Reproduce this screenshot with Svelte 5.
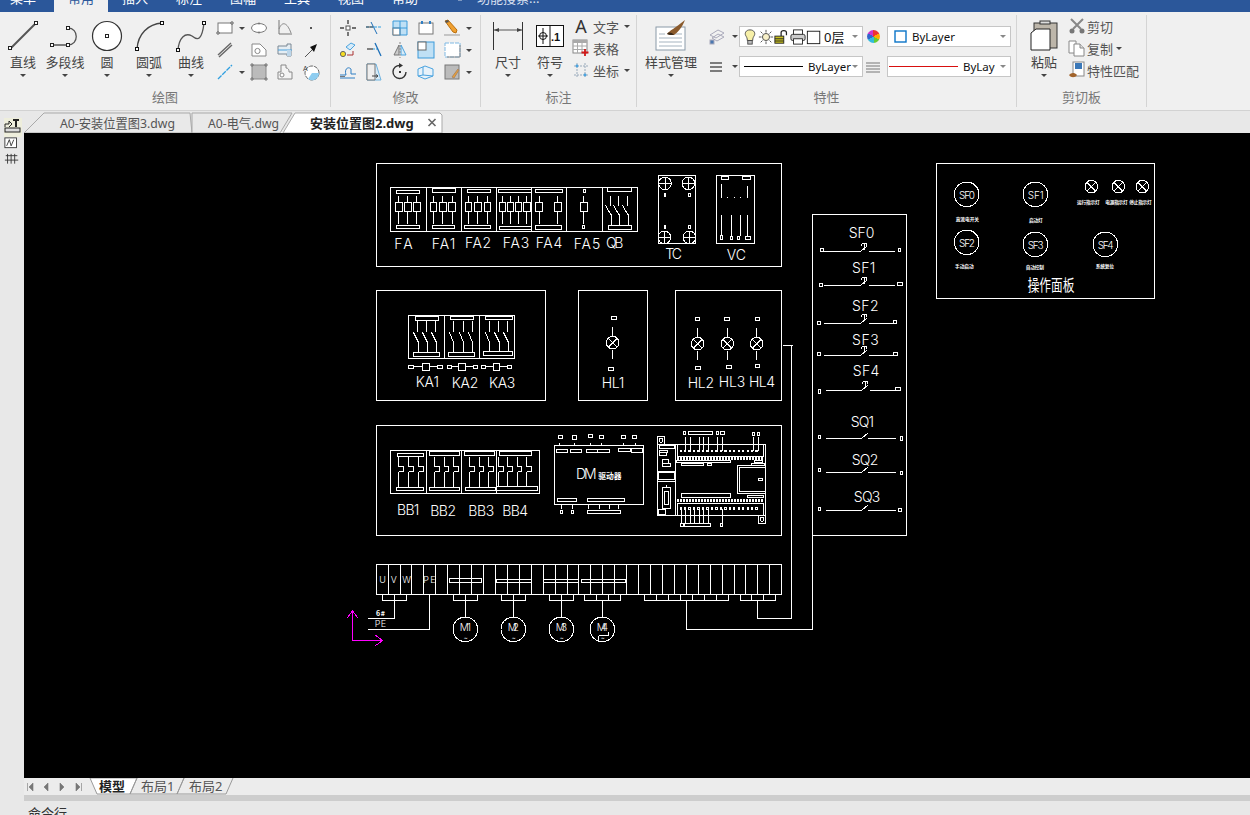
<script>
  const snap = (v) => Math.round(v - 0.5) + 0.5;
  let d = '';
  const circles = [];
  const labels = [];

  // coordinates are read off 3x crops: origin (ox,oy), values in crop pixels
  function crop(ox, oy) {
    const X = (v) => snap(ox + v / 3);
    const Y = (v) => snap(oy + v / 3);
    return {
      r(x1, y1, x2, y2) {
        d += `M${X(x1)} ${Y(y1)}H${X(x2)}V${Y(y2)}H${X(x1)}Z`;
      },
      l(x1, y1, x2, y2) {
        d += `M${X(x1)} ${Y(y1)}L${X(x2)} ${Y(y2)}`;
      },
      c(x, y, r, cross) {
        circles.push({ x: ox + x / 3, y: oy + y / 3, r: r / 3, cross });
      },
      t(text, x1, x2, base, size = 14, cls = 'cad') {
        labels.push({ text, x: ox + x1 / 3, y: oy + base / 3, w: (x2 - x1) / 3, size, cls });
      }
    };
  }

  // upper cabinet
  const a = crop(370, 155);
  a.r(19, 25, 1235, 333);
  a.r(61, 97, 803, 229);
  [170, 275, 380, 485, 590, 698].forEach((x) => a.l(x, 97, x, 229));
  const breakers = [
    { top: [79, 105, 149, 115], bot: [79, 211, 149, 221], poles: [86, 113, 140] },
    { top: [186, 100, 257, 113], bot: [186, 211, 254, 221], poles: [190, 218, 246] },
    { top: [291, 103, 362, 113], bot: [283, 211, 362, 221], poles: [295, 323, 352] },
    { top: [384, 102, 485, 112], bot: [387, 213, 485, 224], poles: [397, 421, 445, 470] },
    { top: [497, 103, 578, 113], bot: [497, 211, 575, 224], poles: [507, 563] },
    { top: [640, 103, 646, 113], bot: [637, 211, 643, 221], poles: [641] }
  ];
  breakers.forEach((b) => {
    a.r(...b.top);
    a.r(...b.bot);
    b.poles.forEach((x) => {
      a.l(x, 120, x, 142);
      a.r(x - 10, 142, x + 10, 170);
      a.l(x, 170, x, 205);
    });
  });
  a.r(712, 98, 785, 110);
  a.r(716, 211, 785, 224);
  [720, 745, 772].forEach((x) => {
    a.l(x, 120, x, 150);
    a.l(x - 15, 152, x + 3, 182);
    a.l(x + 3, 176, x + 3, 208);
  });
  a.r(865, 61, 977, 266);
  [[885, 85], [955, 85], [883, 247], [958, 247]].forEach(([x, y]) => a.c(x, y, 19, 'plus'));
  [[885, 120], [958, 120], [885, 215], [958, 215]].forEach(([x, y]) => a.r(x - 2, y - 5, x + 2, y + 5));
  a.r(1039, 61, 1154, 266);
  a.r(1055, 65, 1075, 73);
  a.r(1118, 65, 1141, 73);
  a.l(1054, 85, 1054, 128);
  a.l(1133, 90, 1133, 128);
  [1072, 1092, 1112].forEach((x) => a.l(x, 125, x, 128));
  [1054, 1085, 1110, 1133].forEach((x) => a.l(x, 178, x, 240));
  a.r(1051, 240, 1056, 252);
  a.r(1081, 244, 1088, 254);
  a.r(1102, 244, 1109, 254);
  a.r(1126, 244, 1142, 254);
  [
    ['FA', 73, 128, 282], ['FA1', 185, 256, 282], ['FA2', 285, 363, 278], ['FA3', 398, 478, 278],
    ['FA4', 497, 577, 278], ['FA5', 611, 691, 281], ['QB', 708, 760, 278], ['TC', 886, 936, 311], ['VC', 1070, 1128, 314]
  ].forEach(([t, x1, x2, y]) => a.t(t, x1, x2, y));

  // relays
  a.r(19, 406, 527, 737);
  a.r(115, 481, 434, 610);
  a.l(223, 481, 223, 610);
  a.l(328, 481, 328, 610);
  [[136, 484, 206, 496], [241, 484, 311, 494], [346, 484, 426, 494], [130, 591, 209, 603], [235, 592, 314, 605], [340, 588, 428, 600]]
    .forEach((b) => a.r(...b));
  [[142, 169, 196], [249, 279, 306], [357, 385, 413]].forEach((set) =>
    set.forEach((x) => {
      a.l(x, 497, x, 530);
      a.l(x - 12, 532, x + 2, 562);
      a.l(x + 2, 558, x + 2, 588);
    })
  );
  [[116, 130, 157, 177, 202, 218], [232, 245, 265, 287, 310, 322], [334, 347, 370, 389, 412, 425]].forEach(([p, q, s, t, u, v]) => {
    a.r(p, 631, q, 640);
    a.l(q, 635, s, 635);
    a.r(s, 625, t, 647);
    a.l(t, 635, u, 635);
    a.r(u, 631, v, 640);
  });
  a.t('KA1', 137, 207, 695);
  a.t('KA2', 245, 325, 700);
  a.t('KA3', 357, 436, 700);

  // lamps
  a.r(625, 406, 833, 737);
  a.r(916, 406, 1235, 737);
  [[728, 563, 724, 484, 740, 494, 715, 637, 731, 647], [983, 566, 976, 487, 989, 497, 977, 633, 992, 643], [1072, 566, 1063, 487, 1079, 497, 1069, 631, 1085, 640], [1160, 566, 1156, 487, 1169, 497, 1156, 628, 1169, 637]]
    .forEach(([x, y, p, q, r, s, t, u, v, w]) => {
      a.r(p, q, r, s);
      a.l(x, y - 48, x, y - 19);
      a.c(x, y, 19, 'x');
      a.l(x, y + 19, x, y + 47);
      a.r(t, u, v, w);
    });
  a.t('HL1', 695, 763, 700);
  a.t('HL2', 953, 1032, 700);
  a.t('HL3', 1046, 1126, 697);
  a.t('HL4', 1137, 1215, 695);

  // lower cabinet
  const b = crop(370, 420);
  b.r(19, 15, 1235, 347);
  b.r(61, 91, 509, 220);
  [170, 275, 380].forEach((x) => b.l(x, 91, x, 220));
  [[81, 100, 161, 110], [177, 95, 267, 105], [282, 95, 372, 105], [387, 95, 485, 105], [79, 202, 159, 212], [177, 202, 267, 212], [285, 202, 375, 212], [380, 198, 503, 212]]
    .forEach((r) => b.r(...r));
  [85, 115, 145, 193, 222, 250, 298, 327, 356, 385, 412, 441, 470].forEach((x) => {
    b.l(x, 108, x, 138);
    b.l(x, 138, x + 14, 138);
    b.l(x + 14, 138, x + 14, 155);
    b.l(x + 14, 155, x, 155);
    b.l(x, 155, x, 198);
  });
  b.t('BB1', 81, 148, 285);
  b.t('BB2', 181, 258, 288);
  b.t('BB3', 295, 373, 288);
  b.t('BB4', 397, 474, 288);

  // driver
  b.r(553, 76, 821, 254);
  [[565, 46, 577, 56, 568], [607, 46, 619, 58, 612], [655, 43, 668, 53, 661], [688, 46, 700, 56, 694], [754, 46, 767, 56, 760], [787, 46, 800, 56, 795]]
    .forEach(([x1, y1, x2, y2, x]) => {
      b.r(x1, y1, x2, y2);
      b.l(x, 66, x, 76);
    });
  [[559, 88, 593, 97], [601, 88, 635, 97], [649, 88, 682, 97], [682, 88, 717, 97], [745, 84, 782, 94], [783, 86, 818, 97], [562, 235, 620, 245], [652, 235, 764, 245], [571, 270, 578, 281], [604, 270, 611, 281], [652, 270, 752, 280]]
    .forEach((r) => b.r(...r));
  [574, 607, 655, 688, 717, 745].forEach((x) => b.l(x, 254, x, 266));
  b.t('DM', 618, 680, 178);
  b.t('驱动器', 685, 755, 177, 7.8, 'heavy');

  // PLC
  const p = crop(650, 428);
  p.r(22, 48, 347, 263);
  p.r(22, 25, 44, 48);
  p.c(33, 37, 6);
  p.r(325, 263, 347, 285);
  p.c(336, 274, 6);
  p.l(76, 48, 76, 263);
  [[28, 52, 72, 60], [28, 66, 52, 74], [28, 74, 50, 82], [36, 94, 54, 106], [38, 106, 62, 116], [26, 134, 72, 155], [25, 245, 45, 258], [82, 48, 340, 85], [82, 225, 340, 262], [262, 111, 345, 197], [268, 117, 345, 191], [324, 150, 338, 158], [99, 10, 107, 20], [114, 10, 186, 20], [198, 10, 206, 20], [210, 10, 224, 20], [306, 13, 314, 23], [321, 13, 329, 23], [91, 285, 99, 296], [102, 285, 182, 296], [210, 285, 218, 296], [78, 98, 240, 104], [93, 105, 160, 113], [172, 105, 185, 113], [93, 196, 240, 208], [305, 106, 342, 111], [312, 96, 338, 104], [292, 201, 340, 209]]
    .forEach((r) => p.r(...r));
  p.l(22, 130, 76, 130);
  p.l(22, 160, 76, 160);
  p.r(38, 178, 62, 240);
  p.l(50, 170, 50, 178);
  p.r(44, 190, 56, 228);
  [107, 122, 148, 161, 175, 203, 217, 310, 325].forEach((x) => p.l(x, 25, x, 68));
  [94, 107, 121, 134, 148, 161, 175, 216].forEach((x) => p.l(x, 241, x, 285));
  for (let x = 92; x < 332; x += 13.4) {
    p.r(x - 2, 66, x + 2, 70);
    p.r(x - 2, 239, x + 2, 243);
  }
  for (let x = 82; x < 340; x += 9) {
    p.r(x, 88, x + 4, 94);
    p.r(x, 215, x + 4, 221);
  }

  // terminal strip and motors
  const c = crop(340, 555);
  c.r(109, 28, 1325, 118);
  [146, 182, 215, 251, 287, 323, 359, 395, 431, 467, 503, 539, 575, 611, 647, 683, 716, 752, 788, 824, 860, 896, 932, 968, 1004, 1040, 1076, 1112, 1148, 1184, 1217, 1253, 1289]
    .forEach((x) => c.l(x, 28, x, 118));
  c.r(328, 70, 425, 83);
  c.r(468, 73, 574, 82);
  c.r(611, 73, 716, 82);
  c.r(724, 73, 857, 82);
  [[127, 200, [163]], [340, 413, [376]], [484, 557, [520]], [628, 701, [664]], [733, 842, [769, 806]], [913, 1166, [949, 985, 1021, 1058, 1094, 1130]], [1201, 1307, [1234, 1271]]]
    .forEach(([x1, x2, divs]) => {
      c.r(x1, 119, x2, 137);
      divs.forEach((x) => c.l(x, 119, x, 137));
    });
  c.l(163, 137, 163, 190);
  c.l(163, 190, 81, 190);
  c.l(269, 118, 269, 223);
  c.l(269, 223, 81, 223);
  [[376, 'M1'], [520, 'M2'], [664, 'M3'], [787, 'M4']].forEach(([x, t]) => {
    c.l(x, 137, x, 187);
    c.c(x, 223, 37);
    c.t(t, x - 17, x + 17, 229, 10);
    c.t('~', x - 5, x + 6, 254, 6);
  });
  c.l(775, 240, 775, 258);
  c.l(775, 240, 805, 240);
  c.l(805, 240, 805, 228);
  c.t('U', 118, 135, 85, 9);
  c.t('V', 152, 172, 85, 9);
  c.t('W', 187, 210, 85, 9);
  c.t('PE', 250, 287, 85, 9);
  c.t('6#', 108, 135, 182, 7, 'heavy');
  c.t('PE', 104, 138, 215, 9);
  c.l(1355, -630, 1355, 190);
  c.l(1355, 190, 1252, 190);
  c.l(1252, 190, 1252, 137);
  c.l(1418, -70, 1418, 223);
  c.l(1418, 223, 1040, 223);
  c.l(1040, 223, 1040, 137);
  a.l(1237, 572, 1266, 572);

  // switches column
  const e = crop(805, 155);
  e.r(22, 178, 305, 1141);
  [
    ['SF0', 131, 208, 250, 290, [46, 281, 54, 290], 55, 165, 190, 268, [279, 280, 285, 290], true],
    ['SF1', 141, 211, 354, 392, [43, 385, 51, 394], 55, 165, 190, 268, [277, 382, 293, 392], true],
    ['SF2', 141, 221, 468, 505, [37, 499, 45, 509], 55, 165, 190, 265, [265, 496, 275, 505], true],
    ['SF3', 141, 221, 570, 601, [37, 591, 45, 601], 55, 165, 190, 265, [265, 592, 278, 601], true],
    ['SF4', 143, 223, 663, 706, [40, 703, 47, 715], 60, 168, 193, 272, [272, 697, 285, 706], true],
    ['SQ1', 137, 207, 817, 850, [40, 841, 47, 851], 60, 168, 187, 272, [286, 845, 293, 856], false],
    ['SQ2', 140, 220, 930, 952, [40, 940, 47, 950], 60, 168, 187, 272, [286, 949, 293, 959], false],
    ['SQ3', 146, 226, 1042, 1066, [40, 1056, 47, 1066], 60, 168, 187, 272, [280, 1060, 290, 1070], false]
  ].forEach(([t, x1, x2, base, y, left, l1, l2, r1, r2, right, push]) => {
    e.t(t, x1, x2, base);
    e.r(...left);
    e.r(...right);
    e.l(l1, y, l2, y);
    e.l(r1, y, r2, y);
    e.l(l2, y, l2 + 22, y - 18);
    if (push) {
      e.l(l2 + 12, y - 8, l2 + 12, y - 26);
      e.l(l2 + 5, y - 26, l2 + 20, y - 26);
      e.l(l2 + 5, y - 26, l2 + 5, y - 20);
      e.l(l2 + 20, y - 26, l2 + 20, y - 20);
    }
  });

  // operator panel
  e.r(394, 25, 1049, 430);
  [['SF0', 485, 118], ['SF1', 691, 118], ['SF2', 485, 262], ['SF3', 691, 268], ['SF4', 901, 268]].forEach(([t, x, y]) => {
    e.c(x, y, 37);
    e.t(t, x - 23, x + 25, y + 13, 10);
  });
  [859, 940, 1012].forEach((x) => e.c(x, 95, 19, 'x'));
  [
    ['直流电开关', 452, 522, 198], ['启动灯', 672, 713, 201], ['运行指示灯', 816, 884, 146], ['电源指示灯', 901, 968, 146], ['停止指示灯', 973, 1040, 146],
    ['手动启动', 450, 506, 339], ['自动控制', 662, 717, 341], ['系统复位', 872, 927, 339]
  ].forEach(([t, x1, x2, y]) => e.t(t, x1, x2, y, 4.7, 'heavy'));
  e.t('操作面板', 668, 808, 407, 16, 'cjk');

  const shapes = d;

  const I = {
    line: '<path d="M4 28 28 4" stroke="#555" stroke-width="2"/><rect x="1.5" y="26.5" width="3" height="3" fill="#fff" stroke="#222"/><rect x="27.5" y="1.5" width="3" height="3" fill="#fff" stroke="#222"/>',
    pline: '<path d="M3 25H19M19 8C30 8 30 25 19 25" stroke="#555" stroke-width="1.3" fill="none"/><rect x="1.5" y="23.5" width="3" height="3" fill="#fff" stroke="#222"/><rect x="17.5" y="23.5" width="3" height="3" fill="#fff" stroke="#222"/><rect x="17.5" y="6.5" width="3" height="3" fill="#fff" stroke="#222"/>',
    circle: '<circle cx="16" cy="16" r="14.5" fill="#fff" stroke="#333" stroke-width="1.2"/><rect x="14.5" y="14.5" width="3" height="3" fill="#fff" stroke="#222"/>',
    arc: '<path d="M4 29C5 14 15 4 29 3" stroke="#444" stroke-width="1.4" fill="none"/><rect x="2.5" y="27.5" width="3" height="3" fill="#fff" stroke="#111"/><rect x="27.5" y="1.5" width="3" height="3" fill="#fff" stroke="#111"/>',
    spline: '<path d="M3 30C4 18 10 12 17 16C23 21 27 20 29 3" stroke="#555" stroke-width="1.3" fill="none"/><rect x="1.5" y="28.5" width="3" height="3" fill="#fff" stroke="#111"/><rect x="27.5" y="1.5" width="3" height="3" fill="#fff" stroke="#111"/>',
    dim: '<g transform="translate(0 2)"><path d="M1.5 0V28M30.5 0V28" stroke="#333" stroke-width="1"/><path d="M2 8H30" stroke="#555"/><path d="M2 8 7 6V10ZM30 8 25 6V10Z" fill="#444"/></g>',
    sym: '<g transform="translate(2 5)"><rect x=".5" y=".5" width="27" height="21" fill="#fff" stroke="#111"/><path d="M14 .5V21.5M7 3V19M2 11H12" stroke="#111"/><circle cx="7" cy="11" r="3.5" fill="none" stroke="#111"/><text x="15" y="16" font-family="Liberation Sans" font-weight="700" font-size="11" fill="#111">.1</text></g>',
    style: '<rect x="1" y="7" width="29" height="23" fill="#fff" stroke="#8a9aa8"/><path d="M4 14H10M4 18H27M4 22H27M4 26H27M14 14H27" stroke="#a5b3bf"/><path d="M12 14C14 11 20 8 30 0C27 8 22 13 19 15C16 15 14 15 12 14Z" fill="#8a5a2c"/><path d="M12 14C14 12 16 12 19 15C16 15 14 15 12 14Z" fill="#3a2a1a"/>',
    paste: '<rect x="6" y="3" width="23" height="25" fill="#bdb6aa" stroke="#333"/><rect x="12" y="1" width="10" height="3" fill="#ddd" stroke="#333"/><path d="M3 13 8 9H22V30H3Z" fill="#fff" stroke="#222"/>',
    rect: '<rect x="2" y="4" width="14" height="10" fill="#fff" stroke="#777"/><circle cx="2" cy="14" r="1.2" fill="#fff" stroke="#555"/><circle cx="16" cy="4" r="1.2" fill="#fff" stroke="#555"/>',
    ellipse: '<ellipse cx="9" cy="9" rx="7.5" ry="4.5" fill="#fff" stroke="#777"/><circle cx="9" cy="4.5" r="1" fill="#777"/><circle cx="9" cy="13.5" r="1" fill="#777"/>',
    graph: '<path d="M3 1V15H16" stroke="#777" fill="none"/><path d="M3 10C6 2 11 3 15 14" stroke="#888" fill="none"/>',
    dot: '<rect x="8" y="8" width="2" height="2" fill="#555"/>',
    mline: '<path d="M2 14 15 2M3 16 16 4" stroke="#666" stroke-width="1.4"/>',
    boundary: '<path d="M2 3H10L16 9V15H2Z" fill="#fff" stroke="#888"/><circle cx="7.5" cy="10" r="2.6" fill="#fff" stroke="#888"/>',
    block: '<path d="M2 5H11V3H15V15H11V13H2Z" fill="#e5edf3" stroke="#7a8894"/><path d="M2 9H16" stroke="#4aa3df"/><rect x="11" y="9" width="4" height="6" fill="#bcd6ea"/>',
    pointer: '<path d="M3 16 11 8" stroke="#555"/><path d="M15 3 8 6 12 11Z" fill="#111"/>',
    xline: '<path d="M2 16 16 2" stroke="#2f9fe0" stroke-width="1.3" stroke-dasharray="5 1"/>',
    hatch: '<rect x="2" y="2" width="14" height="14" fill="#bbb" stroke="#888"/><path d="M0 2H4M2 0V4M14 16H18M16 14V18M0 16H4M2 14V18M14 2H18M16 0V4" stroke="#777"/>',
    gear: '<path d="M5 2H10V5C13 5 13 8 13 9H16V16H2V9H5Z" fill="#f4f4f4" stroke="#888"/><circle cx="6" cy="12" r="2" fill="#fff" stroke="#888"/>',
    area: '<circle cx="10" cy="10" r="7" fill="#fff" stroke="#666" stroke-dasharray="4 1"/><path d="M10 10H17A7 7 0 0 1 6 16Z" fill="#8fcdf0"/><text x="1" y="8" font-family="Liberation Sans" font-size="7" fill="#444">A</text>',
    move: '<rect x="7" y="7" width="4" height="4" fill="#fff" stroke="#555"/><path d="M9 1V5M9 13V17M1 9H5M13 9H17" stroke="#444" stroke-width="1.4"/>',
    trim: '<path d="M1 8H17" stroke="#2f9fe0" stroke-dasharray="3 1"/><path d="M6 3 12 15" stroke="#1d6fb8"/><path d="M1 8H8" stroke="#444"/>',
    array: '<path d="M2 2H16V16H2Z" fill="#bfe0f5" stroke="#3a9ad9"/><rect x="2" y="9" width="7" height="7" fill="#fff" stroke="#777"/><path d="M9 2V16M2 9H16" stroke="#3a9ad9"/>',
    stretch: '<rect x="2" y="4" width="14" height="11" fill="#fff" stroke="#777"/><path d="M5 2V5M13 2V5" stroke="#2f7fc4" stroke-width="2"/>',
    erase: '<path d="M1 16H17" stroke="#999"/><path d="M2 2 5 1 14 11 13 14 10 13Z" fill="#f0a030" stroke="#b97010"/><path d="M2 2 5 1 6 3 3 4Z" fill="#555"/>',
    copy2: '<circle cx="4" cy="13" r="2.6" fill="#f6dc20" stroke="#666"/><path d="M7 6 12 2 16 4 11 9Z" fill="#d7ebf8" stroke="#4aa3df"/><path d="M8 14H14V10" stroke="#a33" fill="none"/>',
    extend: '<path d="M2 8H8" stroke="#444" stroke-width="1.3"/><path d="M8 8H13" stroke="#2f9fe0" stroke-dasharray="2 1"/><path d="M10 2 16 15" stroke="#1d6fb8" stroke-width="1.3"/>',
    mirror: '<path d="M8 4 3 14H8Z" fill="#ccc" stroke="#777"/><path d="M10 4 15 14H10Z" fill="#d7ebf8" stroke="#4aa3df"/><path d="M9 1V17" stroke="#888" stroke-dasharray="2 1"/>',
    scale: '<rect x="1" y="1" width="16" height="16" fill="#bfe0f5" stroke="#3a9ad9"/><rect x="1" y="1" width="8" height="8" fill="#fff" stroke="#666"/>',
    offset: '<rect x="2" y="2" width="15" height="14" fill="#fff" stroke="#7fb9e4" stroke-dasharray="4 1"/><path d="M4 16H17V4" stroke="#888" fill="none"/>',
    fillet: '<path d="M1 15H16M1 12H7C5 6 9 3 12 6V11H17" stroke="#2f7fc4" fill="none"/><path d="M1 13.5H6" stroke="#777"/>',
    chamfer: '<path d="M2 1H11L16 17H2Z" fill="#d7ebf8" stroke="#6fb3e0"/><path d="M2 1H10V17H2Z" fill="#eee" stroke="#777"/><path d="M7 13H13M11 11.5 13 13 11 14.5" stroke="#444" fill="none"/>',
    rotate: '<path d="M15 9A6.5 6.5 0 1 1 9 2.5" stroke="#333" stroke-width="1.4" fill="none"/><path d="M8 0 12 2.5 8 5Z" fill="#333"/><rect x="8" y="8" width="2" height="2" fill="#333"/>',
    box3d: '<path d="M1 6 8 3 16 6 16 13 8 16 1 13Z" fill="#e8f2fa" stroke="#4aa3df"/><path d="M6 4V12L1 13M6 12 16 13" stroke="#4aa3df" fill="none"/>',
    hedit: '<rect x="2" y="2" width="14" height="14" fill="#bbb" stroke="#777"/><path d="M9 14 15 6 16 7 11 15Z" fill="#f0a030" stroke="#a86"/>',
    table: '<rect x="1" y="1" width="14" height="13" fill="#fff" stroke="#888"/><rect x="1" y="1" width="14" height="3" fill="#aaa"/><path d="M1 7H15M1 10.5H15M5.5 4V14M10 4V14" stroke="#aaa"/><path d="M13 10V17M9.5 13.5H16.5" stroke="#d01818" stroke-width="1.8"/>',
    coord: '<path d="M2 5H16M2 14H16M5 2V16M13 2V16" stroke="#9ab" stroke-dasharray="2 1"/><circle cx="5" cy="5" r="1.4" fill="#4aa3df"/><circle cx="13" cy="14" r="1.4" fill="#4aa3df"/>',
    layers: '<path d="M3 7 11 2 17 5 9 10Z M5 10 11 6 17 9 10 13Z" fill="#f2f2f2" stroke="#aab"/><rect x="3" y="12" width="4" height="4" fill="#4a78b0" stroke="#aab"/>',
    weight: '<path d="M3 5H15M3 9H15M3 13H15" stroke="#555" stroke-width="1.5"/>',
    pattern: '<path d="M1 4H15M1 7H15M1 10H15M1 13H15" stroke="#777"/>',
    bulb: '<path d="M9 1C4 1 3 5 4 7C5 9 6 10 6 13H12C12 10 13 9 14 7C15 5 14 1 9 1Z" fill="#f7f0a8" stroke="#444"/><rect x="6.5" y="13" width="5" height="4" fill="#bbb" stroke="#444"/>',
    sun: '<circle cx="9" cy="9" r="4" fill="#f7f0c8" stroke="#444"/><path d="M9 1V4M9 14V17M1 9H4M14 9H17M3 3 5 5M13 13 15 15M3 15 5 13M13 5 15 3" stroke="#444"/>',
    lock: '<rect x="1" y="8" width="10" height="8" fill="#c8c020" stroke="#222"/><path d="M1 11H11M1 13.5H11" stroke="#222"/><path d="M8 8V4C8 1 14 1 14 4V7" stroke="#222" stroke-width="1.4" fill="none"/>',
    printer: '<rect x="4" y="1" width="10" height="6" fill="#fff" stroke="#222"/><rect x="1" y="6" width="16" height="7" rx="2" fill="#ccc" stroke="#222"/><rect x="4" y="11" width="10" height="6" fill="#fff" stroke="#222"/>',
    square: '<rect x="1.5" y="2.5" width="14" height="14" fill="#fff" stroke="#111"/>',
    swatch: '<rect x="1" y="1" width="11" height="11" fill="#fff" stroke="#0a74c8" stroke-width="1.4"/>',
    cut: '<path d="M3 2 13 12M15 2 5 12" stroke="#888" stroke-width="2"/><circle cx="4" cy="14" r="2.5" fill="#777"/><circle cx="14" cy="14" r="2.5" fill="#777"/>',
    dup: '<path d="M1 2H8V14H1Z" fill="#fff" stroke="#888"/><path d="M6 5H12L16 9V17H6Z" fill="#fff" stroke="#888"/><path d="M12 5V9H16" fill="#ddd" stroke="#888"/>',
    match: '<rect x="5" y="1" width="11" height="14" fill="#fff" stroke="#888"/><rect x="7" y="2" width="7" height="6" fill="#3b78b8"/><path d="M1 14C3 12 6 11 9 14C7 17 3 17 1 14Z" fill="#a2642c"/>',
    railTop: '<path d="M1 6H5V3L8 6 5 9M1 6V9" stroke="#222" fill="none"/><path d="M9 2H15M12 2V9" stroke="#222" stroke-width="2"/><rect x="1" y="10" width="15" height="4" fill="#ddd" stroke="#222"/>',
    railA: '<rect x="1" y="1" width="13" height="11" fill="#fff" stroke="#333"/><path d="M3 10 6 3 8 10 11 3" stroke="#333" fill="none"/>',
    railB: '<path d="M2 3H15M1 8H16M4 1V12M8 1V12M12 1V12" stroke="#333" fill="none"/>'
  };

  const navTabs = ['菜单', '常用', '插入', '标注', '图幅', '工具', '视图', '帮助'];
  const drawTools = [['line', '直线'], ['pline', '多段线'], ['circle', '圆'], ['arc', '圆弧'], ['spline', '曲线']];
  const drawGrid = [
    ['rect', 'ellipse', 'graph', 'dot'],
    ['mline', 'boundary', 'block', 'pointer'],
    ['xline', 'hatch', 'gear', 'area']
  ];
  const modifyGrid = [
    ['move', 'trim', 'array', 'stretch', 'erase'],
    ['copy2', 'extend', 'mirror', 'scale', 'offset'],
    ['fillet', 'chamfer', 'rotate', 'box3d', 'hedit']
  ];
</script>

{#snippet ico(name, size = 18, box = 18)}
  <svg class="ico" width={size} height={size} viewBox="0 0 {box} {box}">{@html I[name]}</svg>
{/snippet}

{#snippet big(name, label, arrow = true)}
  <div class="big">
    {@render ico(name, 32, 32)}
    <span class="big-label">{label}</span>
    {#if arrow}<i class="caret"></i>{/if}
  </div>
{/snippet}

<div class="app">
  <nav class="nav">
    {#each navTabs as tab, i}
      <span class="nav-tab" class:first={i === 0} class:active={i === 1}>{tab}</span>
    {/each}
    <span class="search">
      <svg width="12" height="12" viewBox="0 0 12 12"><path d="M6 1C2 1 2 6 4 8H8C10 6 10 1 6 1Z" fill="none" stroke="#cfd8e6" /></svg>
      功能搜索...
    </span>
  </nav>

  <section class="ribbon">
    <div class="panel draw">
      <div class="body">
        {#each drawTools as [name, label]}
          {@render big(name, label)}
        {/each}
        <div class="grid draw-grid">
          {#each drawGrid as row, r}
            {#each row as name, c}
              <div class="cell">
                {@render ico(name)}
                {#if c === 0 && r !== 1}<i class="caret side"></i>{/if}
              </div>
            {/each}
          {/each}
        </div>
      </div>
      <h4>绘图</h4>
    </div>

    <div class="panel modify">
      <div class="body">
        <div class="grid modify-grid">
          {#each modifyGrid as row}
            {#each row as name, c}
              <div class="cell">
                {@render ico(name)}
                {#if c === 4}<i class="caret side"></i>{/if}
              </div>
            {/each}
          {/each}
        </div>
      </div>
      <h4>修改</h4>
    </div>

    <div class="panel annotate">
      <div class="body">
        {@render big('dim', '尺寸')}
        {@render big('sym', '符号')}
        <div class="list">
          <div class="row"><span class="letter">A</span><span>文字</span><i class="caret side"></i></div>
          <div class="row">{@render ico('table')}<span>表格</span></div>
          <div class="row">{@render ico('coord')}<span>坐标</span><i class="caret side"></i></div>
        </div>
      </div>
      <h4>标注</h4>
    </div>

    <div class="panel props">
      <div class="body">
        <div class="style-tool">{@render big('style', '样式管理')}</div>
        <div class="combos">
          <div class="combo-row">
            <div class="lead">{@render ico('layers')}<i class="caret side"></i></div>
            <div class="combo">
              <span class="states">
                {@render ico('bulb', 16)}{@render ico('sun', 16)}{@render ico('lock', 16)}{@render ico('printer', 16)}{@render ico('square', 16)}
              </span>
              <span class="layer">0层</span>
              <i class="caret grey"></i>
            </div>
            <div class="slot"><span class="wheel"></span></div>
            <div class="combo">
              <span class="swatch">{@render ico('swatch', 13, 13)}</span>
              <span class="by">ByLayer</span>
              <i class="caret grey"></i>
            </div>
          </div>
          <div class="combo-row">
            <div class="lead">{@render ico('weight')}<i class="caret side"></i></div>
            <div class="combo">
              <span class="rule black"></span>
              <span class="by">ByLayer</span>
              <i class="caret grey"></i>
            </div>
            <div class="slot">{@render ico('pattern', 16, 16)}</div>
            <div class="combo">
              <span class="rule red"></span>
              <span class="by clip">ByLayer</span>
              <i class="caret grey"></i>
            </div>
          </div>
        </div>
      </div>
      <h4>特性</h4>
    </div>

    <div class="panel clip-panel">
      <div class="body">
        <div class="paste">{@render big('paste', '粘贴')}</div>
        <div class="list">
          <div class="row">{@render ico('cut')}<span>剪切</span></div>
          <div class="row">{@render ico('dup')}<span>复制</span><i class="caret side"></i></div>
          <div class="row">{@render ico('match')}<span>特性匹配</span></div>
        </div>
      </div>
      <h4>剪切板</h4>
    </div>
  </section>

  <div class="main">
    <aside class="rail">
      <div class="rail-top">{@render ico('railTop', 18)}</div>
      {@render ico('railA', 16)}
      {@render ico('railB', 16)}
    </aside>

    <div class="work">
      <svg class="doc-tabs" width="1226" height="22" viewBox="24 111 1226 22">
        <path d="M24 133 44 113H190L192 133Z" fill="#e9e9e9" stroke="#a9a9a9" />
        <path d="M192 133V113H292L280 133Z" fill="#e9e9e9" stroke="#a9a9a9" />
        <path d="M283 133 295 113H440L442 115V133Z" fill="#fff" stroke="#a9a9a9" />
        <text x="60" y="127.5" class="tab-text" textLength="115" lengthAdjust="spacingAndGlyphs">A0-安装位置图3.dwg</text>
        <text x="208" y="127.5" class="tab-text" textLength="71" lengthAdjust="spacingAndGlyphs">A0-电气.dwg</text>
        <text x="310" y="127.5" class="tab-text strong">安装位置图2.dwg</text>
        <path d="M428.5 119 435.5 126M435.5 119 428.5 126" stroke="#666" stroke-width="1.6" />
      </svg>

      <svg class="canvas" width="1226" height="645" viewBox="24 133 1226 645" shape-rendering="crispEdges">
        <rect x="24" y="133" width="1226" height="645" fill="#000" />
        <path d={shapes} fill="none" stroke="#fff" />
        {#each circles as o}
          <circle cx={o.x} cy={o.y} r={o.r} fill="none" stroke="#fff" />
          {#if o.cross === 'x'}
            <path d="M{o.x - o.r * 0.7} {o.y - o.r * 0.7}L{o.x + o.r * 0.7} {o.y + o.r * 0.7}M{o.x + o.r * 0.7} {o.y - o.r * 0.7}L{o.x - o.r * 0.7} {o.y + o.r * 0.7}" stroke="#fff" />
          {:else if o.cross === 'plus'}
            <path d="M{o.x - o.r} {o.y}H{o.x + o.r}M{o.x} {o.y - o.r}V{o.y + o.r}" stroke="#fff" />
          {/if}
        {/each}
        {#each labels as t}
          <text class={t.cls} x={t.x} y={t.y} font-size={t.size} textLength={t.w} lengthAdjust={t.cls === 'cjk' ? 'spacingAndGlyphs' : 'spacing'}>{t.text}</text>
        {/each}
        <path d="M352.5 611V640.5H382.5M347 618 352.5 611 358 618M375 635 382.5 640.5 375 646" fill="none" stroke="#ff00ff" />
      </svg>

      <svg class="layout-tabs" width="1226" height="17" viewBox="24 778 1226 17">
        <rect x="24" y="778" width="1226" height="17" fill="#ececec" />
        <path d="M27.5 783V791M33 783 29 787 33 791ZM48 783 44 787 48 791ZM60 783 64 787 60 791ZM76 783 80 787 76 791ZM81.5 783V791" fill="#777" stroke="#777" stroke-width=".6" />
        <path d="M90 778 97 794H130L137 778Z" fill="#fff" stroke="#999" />
        <path d="M130 794 137 778M130 794H177L184 778M177 794 184 778M177 794H226L233 778" fill="none" stroke="#999" />
        <text x="99" y="791" class="tab-text strong">模型</text>
        <text x="141" y="791" class="tab-text">布局1</text>
        <text x="189" y="791" class="tab-text">布局2</text>
      </svg>

      <div class="bar"></div>
      <div class="cmd">命令行</div>
    </div>
  </div>
</div>

<style>
  :global(body) {
    margin: 0;
    background: #e8e8e8;
  }

  .app {
    width: 1250px;
    height: 815px;
    overflow: hidden;
    display: flex;
    flex-direction: column;
    font-family: 'Noto Sans', 'Noto Sans CJK SC', sans-serif;
    font-size: 13px;
    color: #444;
  }

  .nav {
    height: 12px;
    flex: none;
    display: flex;
    align-items: flex-end;
    background: #2b579a;
    color: #fff;
    overflow: hidden;
  }

  .nav-tab {
    width: 54px;
    height: 28px;
    line-height: 28px;
    text-align: center;
    box-sizing: border-box;
    flex: none;
  }

  .nav-tab.first {
    padding-right: 8px;
  }

  .nav-tab.active {
    background: #f0f0f0;
    color: #2b579a;
  }

  .search {
    margin-left: 22px;
    height: 28px;
    line-height: 28px;
    color: #d5dfee;
    display: flex;
    align-items: center;
    gap: 11px;
  }

  .ribbon {
    height: 99px;
    flex: none;
    box-sizing: border-box;
    display: flex;
    padding-top: 3px;
    background: #f0f0f0;
    border-bottom: 1px solid #d2d2d2;
  }

  .panel {
    height: 92px;
    box-sizing: border-box;
    display: flex;
    flex-direction: column;
    border-right: 1px solid #d4d4d4;
    flex: none;
  }

  .draw { width: 331px; }
  .modify { width: 150px; }
  .annotate { width: 156px; }
  .props { width: 380px; }
  .clip-panel { width: 130px; }

  .body {
    flex: 1;
    min-height: 0;
    display: flex;
  }

  .panel h4 {
    margin: 0 0 1px;
    height: 18px;
    line-height: 18px;
    font-size: 13px;
    font-weight: 400;
    color: #777;
    text-align: center;
  }

  .draw .body { padding-left: 2px; }
  .annotate .body { padding-left: 6px; }

  .big {
    width: 42px;
    flex: none;
    padding-top: 5px;
    display: flex;
    flex-direction: column;
    align-items: center;
    white-space: nowrap;
  }

  .big-label {
    height: 18px;
    line-height: 18px;
    margin-top: 1px;
  }

  .ico {
    display: block;
    flex: none;
  }

  .caret {
    display: block;
    width: 0;
    height: 0;
    margin-top: 3px;
    border-left: 3px solid transparent;
    border-right: 3px solid transparent;
    border-top: 3px solid #444;
  }

  .caret.side {
    margin: 0 0 0 5px;
  }

  .caret.grey {
    margin: 0;
    border-top-color: #888;
  }

  .grid {
    display: grid;
    padding-top: 2px;
    grid-auto-rows: 22px;
  }

  .draw-grid {
    grid-template-columns: 34px 26px 26px 26px;
  }

  .draw-grid .cell {
    justify-content: center;
  }

  .draw-grid .cell:nth-child(4n + 1) {
    justify-content: flex-start;
    padding-left: 4px;
  }

  .modify-grid {
    padding-left: 4px;
    grid-template-columns: 26px 26px 26px 26px 36px;
  }

  .modify-grid .cell {
    justify-content: center;
  }

  .modify-grid .cell:nth-child(5n) {
    justify-content: flex-start;
    padding-left: 4px;
  }

  .cell {
    display: flex;
    align-items: center;
    box-sizing: border-box;
  }

  .list {
    margin-left: 1px;
  }

  .list .caret.side {
    margin-left: 2px;
  }

  .clip-panel .list {
    margin-left: -3px;
  }

  .clip-panel .row {
    gap: 1px;
  }

  .row {
    height: 22px;
    display: flex;
    align-items: center;
    gap: 3px;
    color: #555;
    white-space: nowrap;
  }

  .letter {
    width: 18px;
    text-align: center;
    font-size: 18px;
    line-height: 22px;
    color: #333;
  }

  .style-tool {
    width: 68px;
    flex: none;
  }

  .style-tool .big {
    width: 68px;
  }

  .combos {
    padding-top: 11px;
    display: flex;
    flex-direction: column;
    gap: 9px;
  }

  .combo-row {
    display: flex;
    align-items: center;
    height: 21px;
  }

  .lead {
    width: 34px;
    padding-left: 2px;
    box-sizing: border-box;
    display: flex;
    align-items: center;
  }

  .lead .caret {
    margin-left: 7px;
  }

  .slot {
    width: 24px;
    padding-right: 4px;
    box-sizing: border-box;
    display: flex;
    justify-content: center;
    flex: none;
  }

  .combo {
    width: 124px;
    height: 21px;
    box-sizing: border-box;
    background: #fff;
    border: 1px solid #c6c6c6;
    display: flex;
    align-items: center;
    position: relative;
    color: #111;
    font-size: 11.5px;
    flex: none;
  }

  .combo .caret {
    position: absolute;
    right: 4px;
    top: 8px;
  }

  .states {
    display: flex;
    margin-left: 2px;
  }

  .layer {
    margin-left: 2px;
    font-size: 13px;
  }

  .wheel {
    width: 13px;
    height: 13px;
    border-radius: 50%;
    background: conic-gradient(#e33 0 60deg, #fa0 60deg 120deg, #6c3 120deg 180deg, #3bd 180deg 240deg, #36c 240deg 300deg, #c3c 300deg 360deg);
  }

  .swatch {
    margin-left: 6px;
    display: block;
  }

  .swatch + .by {
    margin-left: 5px;
  }

  .rule {
    display: block;
    height: 1px;
    flex: none;
  }

  .rule.black {
    width: 59px;
    margin-left: 4px;
    background: #000;
  }

  .rule.black + .by {
    margin-left: 5px;
  }

  .rule.red {
    width: 69px;
    margin-left: 1px;
    background: #d80f0f;
  }

  .rule.red + .by {
    margin-left: 5px;
  }

  .by.clip {
    width: 32px;
    overflow: hidden;
    white-space: nowrap;
  }

  .paste {
    width: 54px;
    flex: none;
  }

  .paste .big {
    width: 54px;
  }

  .main {
    flex: 1;
    min-height: 0;
    display: flex;
  }

  .rail {
    width: 24px;
    flex: none;
    box-sizing: border-box;
    padding: 7px 0 0 4px;
    background: #e8e8e8;
    display: flex;
    flex-direction: column;
  }

  .rail-top {
    background: #eeeedc;
    width: 18px;
    height: 19px;
  }

  .work {
    width: 1226px;
    display: flex;
    flex-direction: column;
    overflow: hidden;
  }

  .doc-tabs,
  .canvas,
  .layout-tabs {
    display: block;
    flex: none;
  }

  .tab-text {
    font-size: 13px;
    fill: #555;
  }

  .tab-text.strong {
    fill: #222;
    font-weight: 700;
  }

  .cad {
    font-family: 'Inter', 'Liberation Sans', sans-serif;
    font-weight: 300;
    fill: #fff;
  }

  .cjk {
    font-family: 'Noto Sans CJK SC', sans-serif;
    fill: #fff;
  }

  .heavy {
    font-family: 'Noto Sans CJK SC', sans-serif;
    font-weight: 700;
    fill: #fff;
  }

  .bar {
    height: 6px;
    flex: none;
    background: #cdcdcd;
  }

  .cmd {
    height: 14px;
    padding: 2px 0 0 4px;
    box-sizing: border-box;
    line-height: 20px;
    color: #333;
    overflow: hidden;
  }
</style>
